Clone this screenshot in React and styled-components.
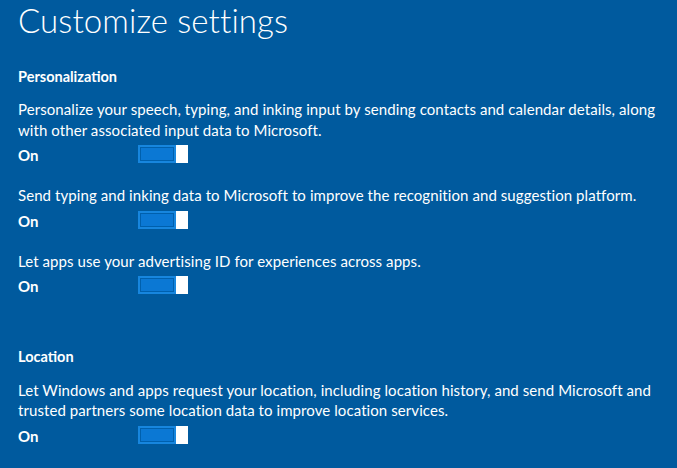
import React from "react";
import styled, { createGlobalStyle } from "styled-components";

const Global = createGlobalStyle`
  html, body {
    margin: 0;
    padding: 0;
    background: #005a9e;
  }
  body {
    font-family: "Lato", "Open Sans", "Liberation Sans", sans-serif;
    color: #ffffff;
    -webkit-font-smoothing: antialiased;
  }
`;

const Page = styled.div`
  width: 677px;
  height: 468px;
  overflow: hidden;
  background: #005a9e;
  padding: 0 0 0 18px;
  box-sizing: border-box;
`;

const Title = styled.h1`
  margin: 0;
  font-family: "Lato", "Open Sans", sans-serif;
  font-weight: 300;
  font-size: 33px;
  line-height: 40px;
  letter-spacing: 0.1px;
`;

const Section = styled.section`
  display: flex;
  flex-direction: column;
  margin-top: ${(p) => p.$top}px;
`;

const Heading = styled.h2`
  margin: 0 0 12.5px;
  font-size: 14.5px;
  font-weight: 700;
  line-height: 20px;
`;

const SettingList = styled.div`
  display: flex;
  flex-direction: column;
  gap: 20px;
`;

const Setting = styled.div`
  display: flex;
  flex-direction: column;
`;

const Description = styled.p`
  margin: 0;
  font-size: 15px;
  line-height: 20.5px;
  letter-spacing: 0.08px;
  max-width: 645px;
`;

const ToggleRow = styled.div`
  display: flex;
  align-items: flex-start;
  margin-top: 5px;
  height: 20px;
`;

const StateLabel = styled.span`
  width: 120px;
  font-size: 15px;
  font-weight: 700;
  line-height: 20px;
`;

const Track = styled.div`
  display: flex;
  width: 50px;
  height: 18px;
`;

const Fill = styled.div`
  flex: 1;
  background: #0b78d4;
  border: 2px solid #1786de;
  box-shadow: inset 0 0 0 1px #0060ad;
`;

const Knob = styled.div`
  width: 12px;
  background: #ffffff;
`;

function Toggle() {
  return (
    <Track role="switch" aria-checked="true">
      <Fill />
      <Knob />
    </Track>
  );
}

function SettingItem({ text }) {
  return (
    <Setting>
      <Description>{text}</Description>
      <ToggleRow>
        <StateLabel>On</StateLabel>
        <Toggle />
      </ToggleRow>
    </Setting>
  );
}

const personalization = [
  "Personalize your speech, typing, and inking input by sending contacts and calendar details, along with other associated input data to Microsoft.",
  "Send typing and inking data to Microsoft to improve the recognition and suggestion platform.",
  "Let apps use your advertising ID for experiences across apps.",
];

const location = [
  "Let Windows and apps request your location, including location history, and send Microsoft and trusted partners some location data to improve location services.",
];

export default function App() {
  return (
    <Page>
      <Global />
      <Title>Customize settings</Title>
      <Section $top={26.5}>
        <Heading>Personalization</Heading>
        <SettingList>
          {personalization.map((t) => (
            <SettingItem key={t} text={t} />
          ))}
        </SettingList>
      </Section>
      <Section $top={51}>
        <Heading>Location</Heading>
        <SettingList>
          {location.map((t) => (
            <SettingItem key={t} text={t} />
          ))}
        </SettingList>
      </Section>
    </Page>
  );
}
